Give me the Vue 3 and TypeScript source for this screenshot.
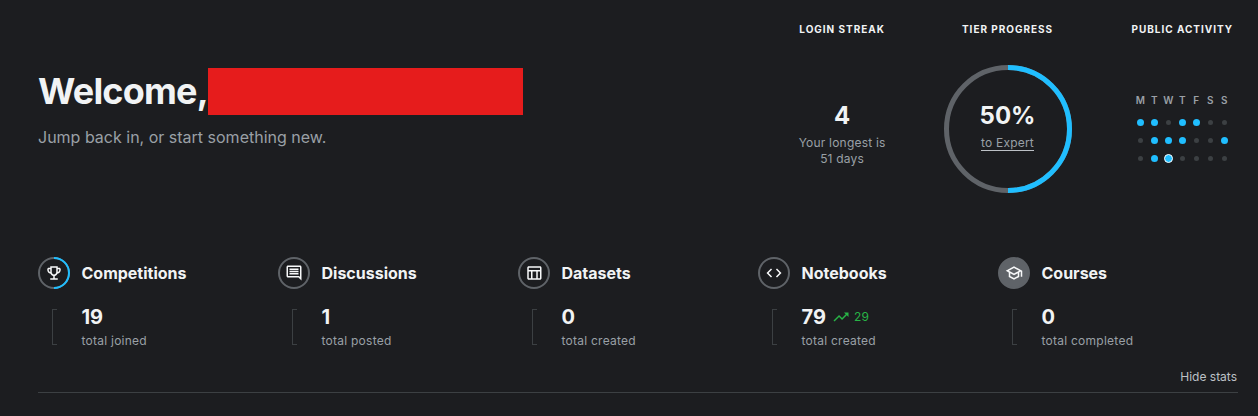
<script setup lang="ts">
interface Stat {
  title: string
  value: number
  label: string
  icon: string
  progress?: boolean
  filled?: boolean
  delta?: number
}

const stats: Stat[] = [
  {
    title: 'Competitions',
    value: 19,
    label: 'total joined',
    progress: true,
    icon: 'M19 5h-2V3H7v2H5c-1.1 0-2 .9-2 2v1c0 2.55 1.92 4.63 4.39 4.94.63 1.5 1.98 2.63 3.61 2.96V19H7v2h10v-2h-4v-3.1c1.63-.33 2.98-1.46 3.61-2.96C19.08 12.63 21 10.55 21 8V7c0-1.1-.9-2-2-2zM5 8V7h2v3.82C5.84 10.4 5 9.3 5 8zm7 6c-1.65 0-3-1.35-3-3V5h6v6c0 1.65-1.35 3-3 3zm7-6c0 1.3-.84 2.4-2 2.82V7h2v1z'
  },
  {
    title: 'Discussions',
    value: 1,
    label: 'total posted',
    icon: 'M21.99 4c0-1.1-.89-2-1.99-2H4c-1.1 0-2 .9-2 2v12c0 1.1.9 2 2 2h14l4 4-.01-18zM20 4v13.17L18.83 16H4V4h16zM6 12h12v2H6zm0-3h12v2H6zm0-3h12v2H6z'
  },
  {
    title: 'Datasets',
    value: 0,
    label: 'total created',
    icon: 'M20 3H5c-1.1 0-2 .9-2 2v14c0 1.1.9 2 2 2h15c1.1 0 2-.9 2-2V5c0-1.1-.9-2-2-2zm0 2v3H5V5h15zm-5 14h-5v-9h5v9zM5 10h3v9H5v-9zm12 9v-9h3v9h-3z'
  },
  {
    title: 'Notebooks',
    value: 79,
    label: 'total created',
    delta: 29,
    icon: 'M9.4 16.6L4.8 12l4.6-4.6L8 6l-6 6 6 6 1.4-1.4zm5.2 0l4.6-4.6-4.6-4.6L16 6l6 6-6 6-1.4-1.4z'
  },
  {
    title: 'Courses',
    value: 0,
    label: 'total completed',
    filled: true,
    icon: 'M12 3L1 9l4 2.18v6L12 21l7-3.82v-6l2-1.09V17h2V9L12 3zm6.82 6L12 12.72 5.18 9 12 5.28 18.82 9zM17 15.99l-5 2.73-5-2.73v-3.72L12 15l5-2.73v3.72z'
  }
]

const days = ['M', 'T', 'W', 'T', 'F', 'S', 'S']
// 1 = active, 0 = idle, 2 = today
const activity = [1, 1, 0, 1, 1, 0, 0, 0, 1, 1, 1, 0, 0, 1, 0, 1, 2, 0, 0, 0, 0]
const dotClass = (v: number) => (v === 2 ? 'dot today' : v === 1 ? 'dot on' : 'dot')
</script>

<template>
  <main class="page">
    <section class="hero">
      <div class="greeting">
        <div class="headline">
          <h1>Welcome,</h1>
          <span class="redacted"></span>
        </div>
        <p>Jump back in, or start something new.</p>
      </div>
      <div class="widgets">
        <div class="widget streak">
          <h2>Login streak</h2>
          <div class="widget-body">
            <strong>4</strong>
            <span>Your longest is<br />51 days</span>
          </div>
        </div>
        <div class="widget tier">
          <h2>Tier progress</h2>
          <div class="ring">
            <svg width="128" height="128" viewBox="0 0 128 128">
              <circle cx="64" cy="64" r="61.5" fill="none" stroke="#5f6368" stroke-width="5" />
              <path d="M64 2.5a61.5 61.5 0 0 1 0 123" fill="none" stroke="#20beff" stroke-width="5" />
            </svg>
            <div class="ring-text">
              <strong>50%</strong>
              <a>to Expert</a>
            </div>
          </div>
        </div>
        <div class="widget activity">
          <h2>Public activity</h2>
          <div class="widget-body">
            <div class="calendar">
              <span v-for="(d, i) in days" :key="i" class="day">{{ d }}</span>
              <i v-for="(v, i) in activity" :key="'d' + i" :class="dotClass(v)"></i>
            </div>
          </div>
        </div>
      </div>
    </section>

    <section class="stats">
      <article v-for="s in stats" :key="s.title" class="stat">
        <header>
          <span class="badge">
            <svg class="badge-ring" width="32" height="32" viewBox="0 0 32 32">
              <circle cx="16" cy="16" r="15" :fill="s.filled ? '#5f6368' : 'none'" stroke="#5f6368" stroke-width="2" />
              <path v-if="s.progress" d="M16 1a15 15 0 0 1 0 30" fill="none" stroke="#20beff" stroke-width="2" />
            </svg>
            <svg class="badge-icon" width="18" height="18" viewBox="0 0 24 24">
              <path :d="s.icon" fill="#f8f9fa" />
            </svg>
          </span>
          <h3>{{ s.title }}</h3>
        </header>
        <div class="stat-body">
          <span class="bracket"></span>
          <div>
            <div class="value">
              {{ s.value }}
              <span v-if="s.delta" class="delta">
                <svg width="18" height="18" viewBox="0 0 24 24">
                  <path d="M16 6l2.29 2.29-4.88 4.88-4-4L2 16.59 3.41 18l6-6 4 4 6.3-6.29L22 12V6z" fill="#28b446" />
                </svg>
                {{ s.delta }}
              </span>
            </div>
            <div class="label">{{ s.label }}</div>
          </div>
        </div>
      </article>
    </section>

    <div class="toggle">Hide stats</div>
    <hr class="rule" />
  </main>
</template>

<style>
html,
body {
  margin: 0;
  background: #1c1d20;
}
</style>

<style scoped>
.page {
  box-sizing: border-box;
  width: 1258px;
  height: 416px;
  padding: 0 20px 0 38px;
  background: #1c1d20;
  font-family: Inter, "Liberation Sans", sans-serif;
  color: #f1f3f4;
  overflow: hidden;
}
.hero {
  display: flex;
  justify-content: space-between;
  padding-top: 23px;
  padding-right: 5px;
}
.greeting {
  padding-top: 45px;
}
.headline {
  display: flex;
  align-items: center;
  height: 47px;
}
h1 {
  margin: 0;
  font-size: 36px;
  line-height: 47px;
  font-weight: 700;
  letter-spacing: -0.8px;
  white-space: nowrap;
}
.redacted {
  width: 315px;
  height: 47px;
  background: #e61c1c;
}
.greeting p {
  margin: 12px 0 0;
  font-size: 16px;
  line-height: 20px;
  color: #9aa0a6;
}
.widgets {
  display: flex;
  gap: 58px;
}
.widget {
  display: flex;
  flex-direction: column;
  align-items: center;
}
.activity {
  margin-left: 2px;
}
h2 {
  margin: 0 0 30px;
  font-size: 10px;
  line-height: 12px;
  font-weight: 700;
  letter-spacing: 0.97px;
  text-transform: uppercase;
  white-space: nowrap;
  color: #f1f3f4;
}
.widget-body {
  height: 128px;
  display: flex;
  flex-direction: column;
  align-items: center;
  justify-content: center;
}
.activity .widget-body {
  box-sizing: border-box;
  padding-top: 4px;
}
.streak .widget-body {
  box-sizing: border-box;
  padding-top: 35px;
  justify-content: flex-start;
}
.streak strong,
.ring-text strong {
  font-size: 24px;
  line-height: 32px;
  font-weight: 700;
}
.streak span {
  margin-top: 3px;
  font-size: 12px;
  line-height: 16px;
  letter-spacing: 0.2px;
  text-align: center;
  color: #9aa0a6;
  white-space: nowrap;
}
.ring {
  display: grid;
  width: 128px;
  height: 128px;
}
.ring > * {
  grid-area: 1 / 1;
}
.ring-text {
  display: flex;
  flex-direction: column;
  align-items: center;
  justify-content: flex-start;
  padding-top: 35px;
}
.ring-text a {
  margin-top: 4px;
  font-size: 12px;
  line-height: 14px;
  letter-spacing: 0.2px;
  color: #9aa0a6;
  border-bottom: 1px solid #bdc1c6;
}
.calendar {
  display: grid;
  grid-template-columns: repeat(7, 14px);
  grid-auto-rows: 18px;
  place-items: center;
}
.day {
  font-size: 10px;
  line-height: 12px;
  font-weight: 600;
  color: #9aa0a6;
  margin-bottom: 8px;
}
.calendar .dot {
  display: block;
  width: 5px;
  height: 5px;
  border-radius: 50%;
  background: #3c4043;
}
.calendar .dot.on {
  width: 7px;
  height: 7px;
  background: #20beff;
}
.calendar .dot.today {
  box-sizing: border-box;
  width: 9px;
  height: 9px;
  background: #20beff;
  border: 1px solid #fff;
}
.stats {
  display: grid;
  grid-template-columns: repeat(5, 240px);
  margin-top: 64px;
}
.stat header {
  display: flex;
  align-items: center;
  gap: 11.5px;
  height: 32px;
}
.badge {
  display: grid;
  place-items: center;
  width: 32px;
  height: 32px;
}
.badge > * {
  grid-area: 1 / 1;
}
h3 {
  margin: 0;
  font-size: 16px;
  line-height: 20px;
  font-weight: 700;
}
.stat-body {
  display: flex;
  margin-top: 20px;
}
.bracket {
  box-sizing: border-box;
  width: 5px;
  height: 36px;
  margin: 0 24.5px 0 14px;
  border: 1px solid #3c4043;
  border-right: 0;
}
.value {
  display: flex;
  align-items: center;
  height: 18px;
  margin-top: -1px;
  font-size: 20px;
  line-height: 18px;
  font-weight: 700;
}
.delta {
  display: flex;
  align-items: center;
  gap: 4px;
  margin-left: 6px;
  font-size: 12px;
  font-weight: 400;
  letter-spacing: 0.3px;
  color: #28b446;
}
.label {
  margin-top: 7px;
  font-size: 12px;
  line-height: 16px;
  letter-spacing: 0.25px;
  color: #9aa0a6;
}
.toggle {
  margin-top: 20px;
  padding-right: 1px;
  text-align: right;
  font-size: 12px;
  line-height: 16px;
  color: #bdc1c6;
}
.rule {
  margin: 7px 0 0;
  border: 0;
  border-top: 1px solid #3c4043;
}
</style>
